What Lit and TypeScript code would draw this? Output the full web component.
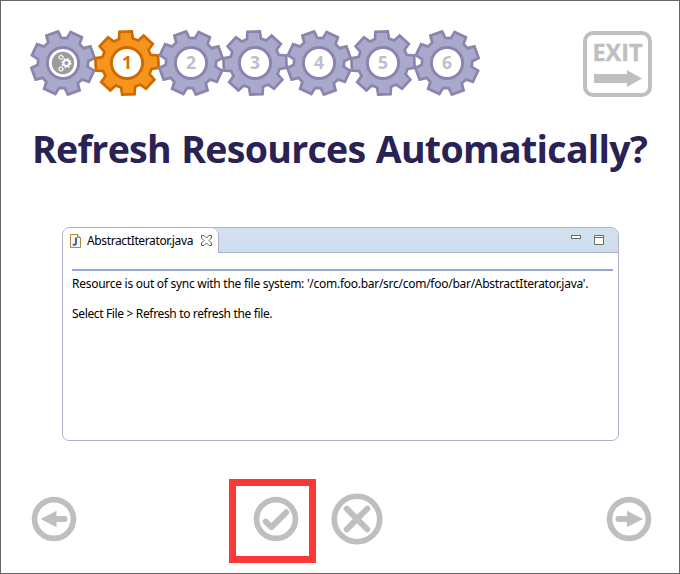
import { LitElement, html, svg, css } from "lit";
import { customElement, property } from "lit/decorators.js";

/** Outline of an eight-toothed gear centred on the origin. */
function gearPath(rotation: number): string {
  const pts: string[] = [];
  for (let k = 0; k < 8; k++) {
    const a = ((rotation + k * 45) * Math.PI) / 180;
    for (const [x, y] of [[-7, -24.2], [-6.2, -31.4], [6.2, -31.4], [7, -24.2]]) {
      const px = x * Math.cos(a) - y * Math.sin(a);
      const py = x * Math.sin(a) + y * Math.cos(a);
      pts.push(`${px.toFixed(2)} ${py.toFixed(2)}`);
    }
  }
  return `M${pts.join("L")}Z`;
}

@customElement("step-gear")
export class StepGear extends LitElement {
  @property({ type: Number }) step = 0;
  @property({ type: Boolean, reflect: true }) active = false;

  static styles = css`
    :host { display: block; width: 64px; height: 68px; position: relative; }
    svg { display: block; overflow: visible; }
    .body { fill: #a9aacb; stroke: #8c83ae; stroke-width: 2.7; }
    .ring { fill: #fff; stroke: #8c83ae; stroke-width: 3; }
    :host([active]) .body { fill: #f7941d; stroke: #ce6b00; }
    :host([active]) .ring { stroke: #ce6b00; }
    .num { font: bold 17.5px "Open Sans", "Noto Sans", sans-serif; fill: #bfbfbf; text-anchor: middle; }
    :host([active]) .num { fill: #d07410; }
    .disc { fill: #9c9c9c; }
    .cog { fill: none; stroke: #fff; }
    .teeth { fill: none; stroke: #fff; }
  `;

  private cog(x: number, y: number, r: number, w: number) {
    const c = 2 * Math.PI * (r + w * 0.7);
    return svg`<circle class="cog" cx=${x} cy=${y} r=${r} stroke-width=${w}></circle>
      <circle class="teeth" cx=${x} cy=${y} r=${r + w * 0.7} stroke-width=${w * 0.8}
        stroke-dasharray="${c / 16} ${c / 16}"></circle>`;
  }

  render() {
    return html`<svg width="64" height="68" viewBox="-32 -34 64 68">
      <path class="body" d=${gearPath(this.step % 2 ? -2.5 : -20)}></path>
      <circle class="ring" r="15.6"></circle>
      ${this.step === 0
        ? svg`<circle class="disc" cx="0" cy="0" r="11.2"></circle>
            ${this.cog(3.4, 0, 3, 1.9)}${this.cog(-2, -5.7, 1.8, 1)}${this.cog(-2, 6, 1.8, 1)}`
        : svg`<text class="num" x="0" y="6">${this.step}</text>`}
    </svg>`;
  }
}

@customElement("nav-button")
export class NavButton extends LitElement {
  @property() kind = "back";

  static styles = css`
    :host { display: block; }
    svg { display: block; }
    .ring { fill: none; stroke: #bfbfbf; stroke-width: 5.7; }
    .solid { fill: #bfbfbf; }
    .stroke { fill: none; stroke: #bfbfbf; stroke-width: 6; stroke-linecap: round; stroke-linejoin: round; }
  `;

  private glyph() {
    switch (this.kind) {
      case "check":
        return svg`<path class="stroke" d="M-10.3 2.7L-4.6 8.2L10.2 -6.7"></path>`;
      case "cross":
        return svg`<path class="stroke" d="M-10.3 -10.3L10.3 10.3M10.3 -10.3L-10.3 10.3"></path>`;
      case "next":
        return svg`<path class="solid" d="M-10.7 -2.9H-2V-8.3L14 0L-2 8.3V2.9H-10.7A2.9 2.9 0 0 1 -10.7 -2.9Z"></path>`;
      default:
        return svg`<path class="solid" d="M10.7 -2.9H2.5V-8.3L-13.5 0L2.5 8.3V2.9H10.7A2.9 2.9 0 0 0 10.7 -2.9Z"></path>`;
    }
  }

  render() {
    const r = this.kind === "cross" ? 25.6 : 22.3;
    const s = this.kind === "cross" ? 52 : 46;
    return html`<svg width=${s} height=${s} viewBox="${-s / 2} ${-s / 2} ${s} ${s}">
      <circle class="ring" r=${r - 2.85}></circle>${this.glyph()}
    </svg>`;
  }
}

@customElement("editor-preview")
export class EditorPreview extends LitElement {
  static styles = css`
    :host {
      display: block; box-sizing: border-box; width: 557px; height: 214px;
      border: 1px solid #b0b0c8; border-radius: 8px 8px 7px 7px; overflow: hidden;
      font: 12px/15px "Noto Sans", "Open Sans", sans-serif; color: #000; background: #fff;
    }
    .bar { display: flex; height: 25px; justify-content: space-between; background: linear-gradient(#d2e1f0, #cddeed); box-shadow: inset 0 -1px #b0b0c8; }
    .tab { display: flex; align-items: center; box-sizing: border-box; width: 156px; padding-left: 7px; background: #fff; border-right: 1px solid #b0b0c8; border-radius: 0 7px 0 0; }
    .name { width: 106px; margin: 0 7.5px 0 6px; white-space: nowrap; letter-spacing: -0.37px; }
    .tools { display: flex; gap: 13px; padding: 7px 14px 0 0; }
    svg { display: block; flex: none; }
    .rule { height: 2px; margin: 16px 5px 0 9px; background: #93a8cd; }
    .text { margin: 5px 0 0 9px; white-space: nowrap; letter-spacing: -0.27px; }
    .text + .text { margin-top: 15px; letter-spacing: -0.35px; }
  `;

  render() {
    return html`
      <div class="bar">
        <div class="tab">
          <svg width="11" height="14" viewBox="0 0 11 14">
            <path d="M.5 .5H7.5L10.5 3.5V13.5H.5Z" fill="#f3f6fb" stroke="#b08b3e"></path>
            <path d="M7.5 .5V3.5H10.5" fill="#e5c679" stroke="#b08b3e"></path>
            <path d="M6 3.5V8.7Q6 10.8 4.2 10.8H2.8" fill="none" stroke="#2c6596" stroke-width="1.9"></path>
          </svg>
          <span class="name">AbstractIterator.java</span>
          <svg width="11" height="11" viewBox="0 0 11 11">
            <path d="M.5 .5H3L5.5 3L8 .5H10.5V3L8 5.5L10.5 8V10.5H8L5.5 8L3 10.5H.5V8L3 5.5L.5 3Z" fill="#fff" stroke="#5e5e5e"></path>
          </svg>
        </div>
        <div class="tools">
          <svg width="10" height="10" viewBox="0 0 10 10"><rect x=".5" y=".5" width="9" height="3" fill="#fff" stroke="#6b6b64"></rect></svg>
          <svg width="10" height="10" viewBox="0 0 10 10"><path d="M.5 .5H9.5V9.5H.5ZM.5 2.5H9.5" fill="#fff" stroke="#6b6b64"></path></svg>
        </div>
      </div>
      <div class="rule"></div>
      <div class="text">Resource is out of sync with the file system: '/com.foo.bar/src/com/foo/bar/AbstractIterator.java'.</div>
      <div class="text">Select File &gt; Refresh to refresh the file.</div>
    `;
  }
}

@customElement("app-root")
export class AppRoot extends LitElement {
  static styles = css`
    :host { display: flex; flex-direction: column; box-sizing: border-box; width: 680px; height: 574px; border: 1px solid #666; background: #fff; overflow: hidden; }
    .top { display: flex; justify-content: space-between; padding: 28px 27px 0 29.7px; height: 68px; }
    .steps { display: flex; }
    .exit { display: block; margin-top: 2px; }
    .exit-box { fill: #fff; stroke: #bfbfbf; stroke-width: 4; }
    .exit-text { font: bold 23px "Open Sans", "Noto Sans", sans-serif; fill: #bfbfbf; stroke: #bfbfbf; stroke-width: 0.4; }
    .exit-arrow { fill: #bfbfbf; }
    h1 { margin: 26px 0 0 31px; height: 52px; font: bold 37.5px/52px "Open Sans", "Noto Sans", sans-serif; color: #2a2154; white-space: nowrap; letter-spacing: -0.7px; word-spacing: 1.2px; }
    editor-preview { margin: 52px 0 0 61px; }
    .controls { display: flex; align-items: flex-start; margin-top: 37px; padding: 0 27px 0 29.5px; height: 86px; }
    .back, .next { margin-top: 18px; }
    .marked { display: flex; align-items: flex-start; box-sizing: border-box; width: 87px; height: 84px; margin: 1px 0 0 152.5px; padding: 9.7px 0 0 17px; border: 7px solid #fb3838; }
    .cross { margin: 15.3px 0 0 14.5px; }
    .next { margin-left: auto; }
  `;

  render() {
    return html`
      <div class="top">
        <div class="steps">
          ${[0, 1, 2, 3, 4, 5, 6].map((n) => html`<step-gear .step=${n} ?active=${n === 1}></step-gear>`)}
        </div>
        <svg class="exit" width="69" height="66" viewBox="0 0 69 66">
          <rect class="exit-box" x="2" y="2" width="65" height="62" rx="8"></rect>
          <text class="exit-text" x="9.5" y="30" textLength="50" lengthAdjust="spacingAndGlyphs">EXIT</text>
          <path class="exit-arrow" d="M11 43H44V39L59 47.5L44 56V52H11Z"></path>
        </svg>
      </div>
      <h1>Refresh Resources Automatically?</h1>
      <editor-preview></editor-preview>
      <div class="controls">
        <nav-button class="back" kind="back"></nav-button>
        <div class="marked"><nav-button kind="check"></nav-button></div>
        <nav-button class="cross" kind="cross"></nav-button>
        <nav-button class="next" kind="next"></nav-button>
      </div>
    `;
  }
}
